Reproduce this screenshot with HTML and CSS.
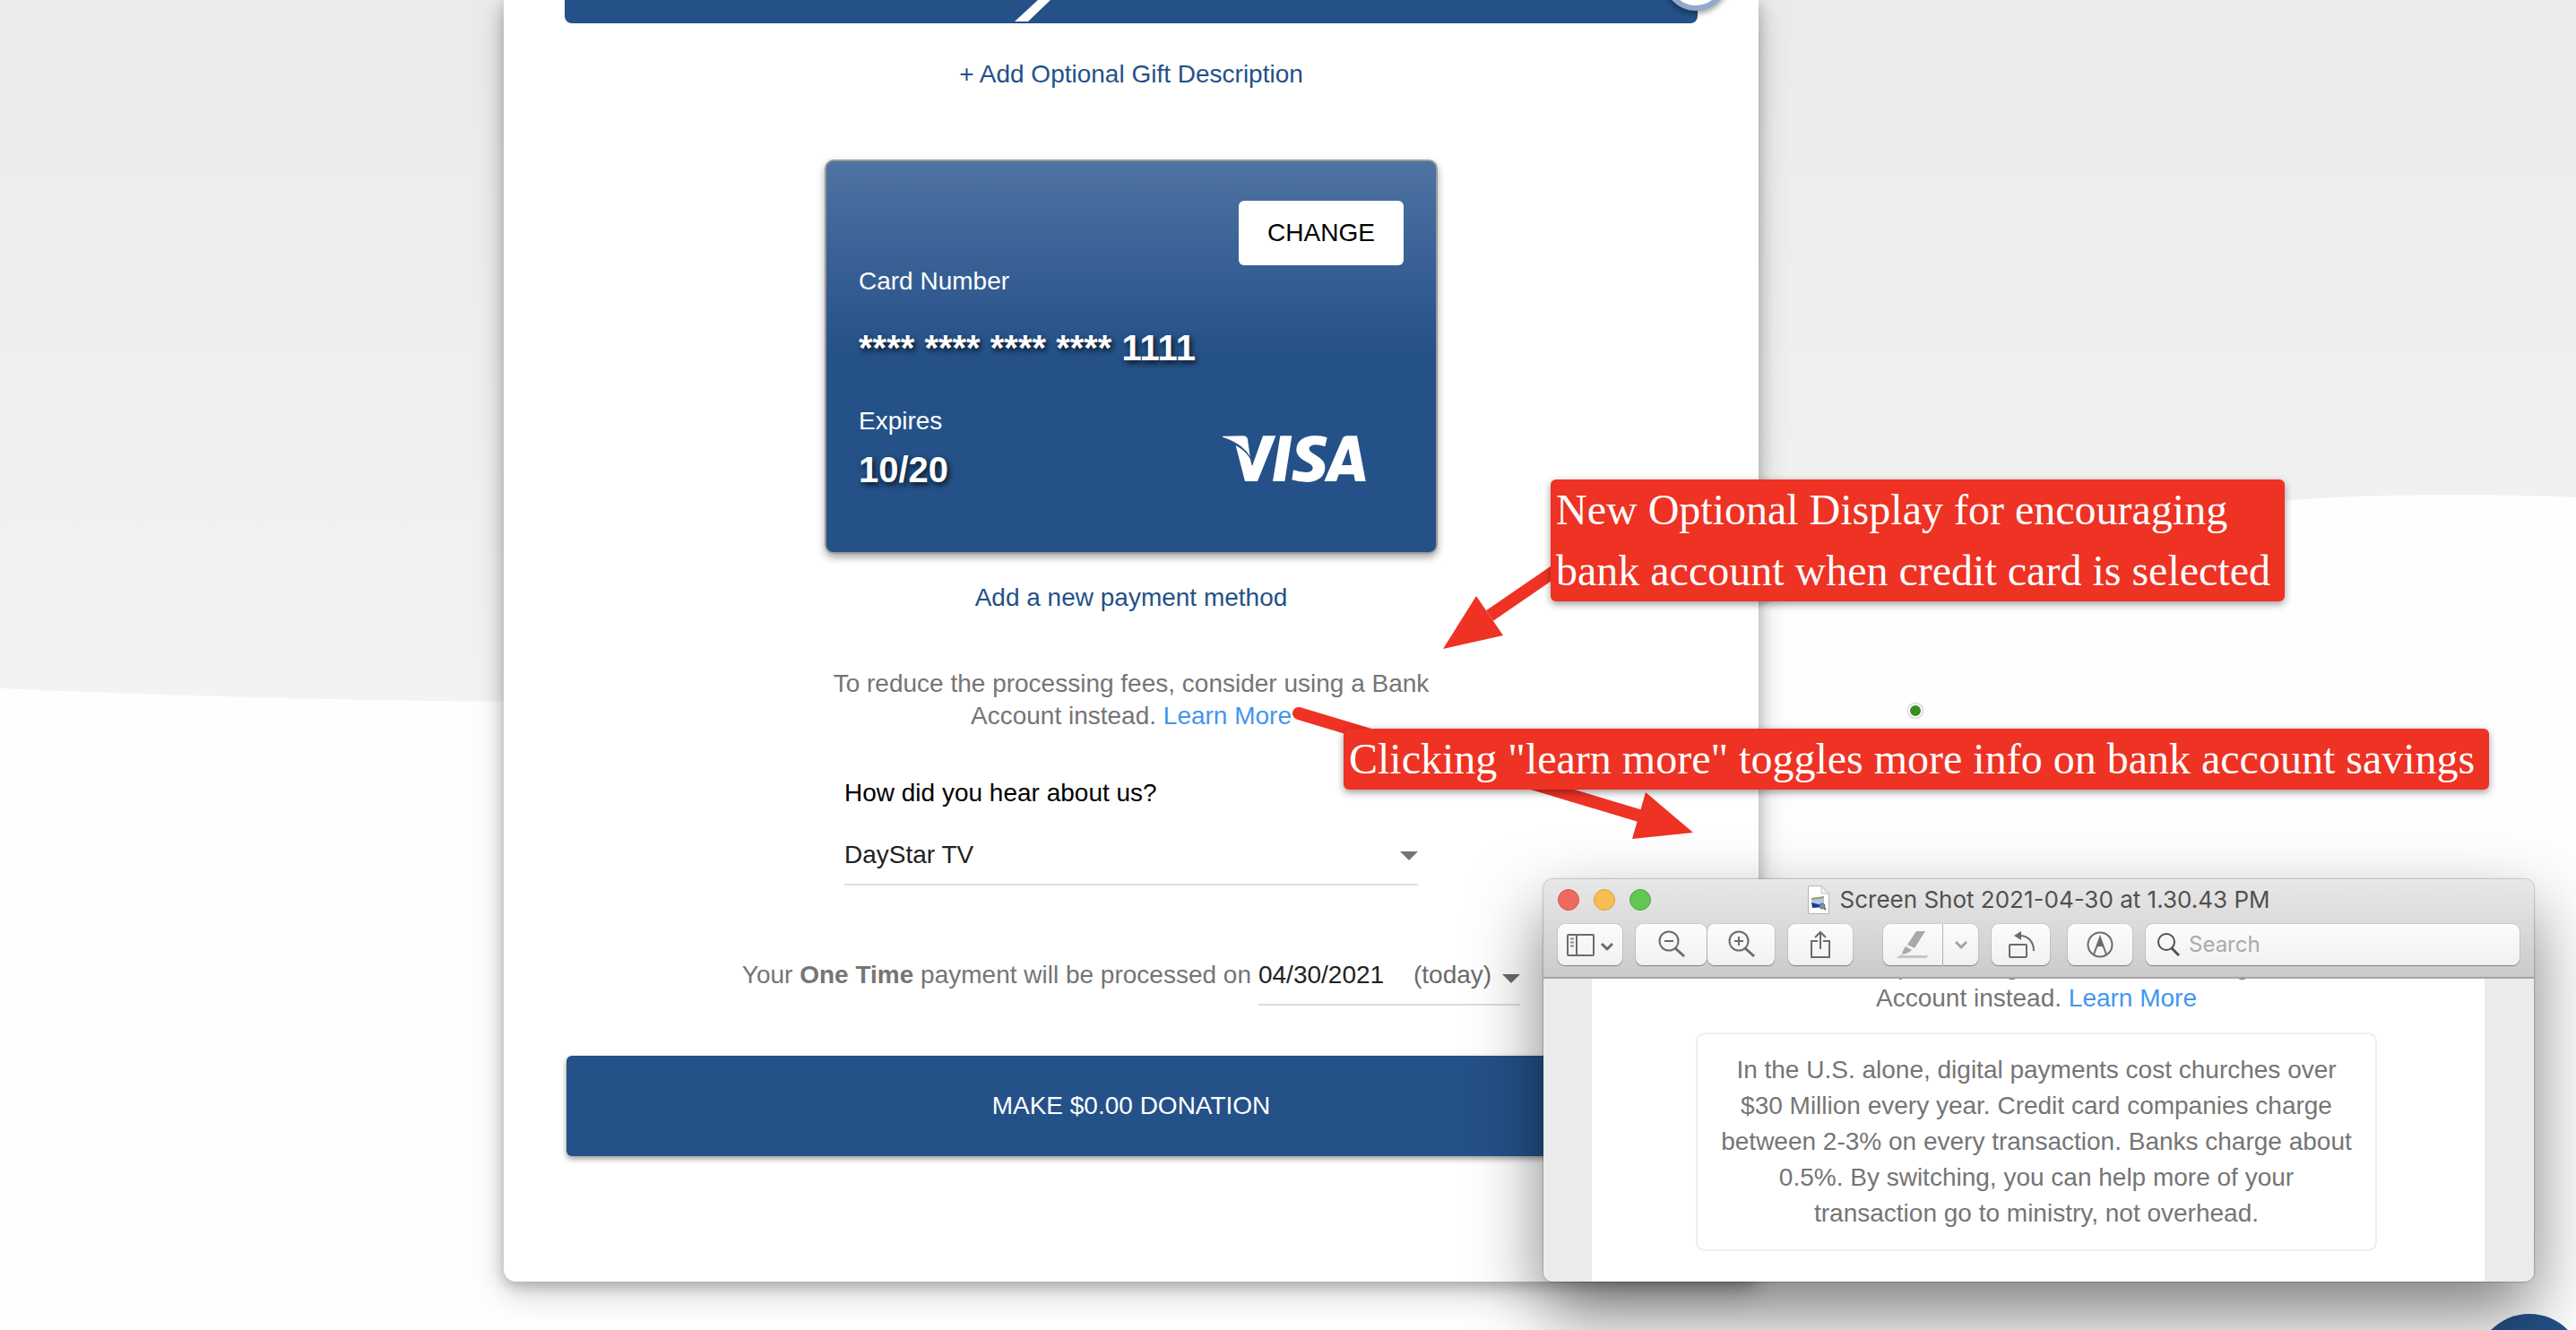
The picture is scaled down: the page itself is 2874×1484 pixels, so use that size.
FILE: index.html
```html
<!DOCTYPE html>
<html lang="en">
<head>
    <meta charset="UTF-8">
    <meta name="viewport" content="width=device-width, initial-scale=1.0">
    <title>Donation</title>
    <link rel="stylesheet" href="styles.css">
</head>
<body>
    <svg class="wave" viewBox="0 0 2874 1484" preserveAspectRatio="none" aria-hidden="true">
        <path d="M0 768 C180 776 380 782 600 783 C1200 790 1700 770 1962 677 C2160 610 2400 552 2740 552 C2790 552 2840 553 2874 555 V1484 H0 Z" fill="#fefefe"/>
    </svg>

    <main class="page">
        <form class="panel">
            <div class="gift-bar">
                <svg class="gift-slash" width="40" height="24" viewBox="0 0 40 24" aria-hidden="true"><path d="M26 0H40L15 24H0Z" fill="#fff"/></svg>
                <span class="gift-ring"></span>
            </div>
            <a class="link gift-link" href="#">+ Add Optional Gift Description</a>

            <section class="card">
                <button type="button" class="change">CHANGE</button>
                <div class="card-label">Card Number</div>
                <div class="card-value card-number">**** **** **** **** 1111</div>
                <div class="card-footer">
                    <div>
                        <div class="card-label">Expires</div>
                        <div class="card-value expires">10/20</div>
                    </div>
                    <svg class="visa" width="160" height="52" viewBox="0 0 480 156" fill="#fff" role="img" aria-label="Visa">
                        <path d="M0 2L70 1Q82 2 84 13L92 70Q66 26 0 5Z"/>
                        <path d="M44 33Q78 52 92 77L99 103L135 1H178L117 153H75Z"/>
                        <path d="M193 1H232L208 153H168Z"/>
                        <path d="M350 7L343 37Q322 29 306 31Q288 35 290 46Q292 56 316 68Q344 84 343 108Q341 152 284 156Q256 156 232 148L237 115Q262 124 282 123Q302 121 302 108Q302 98 280 88Q246 70 247 46Q250 4 306 0Q332 0 350 7Z"/>
                        <path fill-rule="evenodd" d="M340 153L402 9Q406 1 415 1H450L479 153H444L439 130H389L381 153ZM421 43L432 99H399Z"/>
                    </svg>
                </div>
            </section>

            <a class="link payment-link" href="#">Add a new payment method</a>
            <p class="note">To reduce the processing fees, consider using a Bank Account instead. <a href="#">Learn More</a></p>

            <div class="source">
                <label for="source">How did you hear about us?</label>
                <select id="source" name="source">
                    <option>DayStar TV</option>
                </select>
            </div>

            <div class="schedule">
                <label for="date">Your <b>One Time</b> payment will be processed on</label>
                <div class="date-field">
                    <input type="text" id="date" name="date" value="04/30/2021">
                    <button type="button" class="today">(today)</button>
                </div>
            </div>

            <button type="submit" class="donate">MAKE $0.00 DONATION</button>
        </form>
    </main>

    <svg class="arrows" width="2874" height="1484" viewBox="0 0 2874 1484" aria-hidden="true">
        <path d="M1745 630L1662 687" stroke="#ee3224" stroke-width="14"/>
        <path d="M1610 724L1647 665L1677 709Z" fill="#ee3224"/>
        <path d="M1449 796L1832 911" stroke="#ee3224" stroke-width="14" stroke-linecap="round"/>
        <path d="M1889 929L1836 884L1821 936Z" fill="#ee3224"/>
    </svg>
    <div class="callout callout-display">New Optional Display for encouraging<br>bank account when credit card is selected</div>
    <div class="callout callout-toggle">Clicking "learn more" toggles more info on bank account savings</div>
    <span class="dot"></span>
    <button type="button" class="help" aria-label="Help"></button>

    <section class="window">
        <header class="window-head">
            <div class="title-row">
                <div class="lights">
                    <span class="light red"></span>
                    <span class="light yellow"></span>
                    <span class="light green"></span>
                </div>
                <div class="title">
                    <svg width="24" height="32" viewBox="0 0 24 32" aria-hidden="true">
                        <path d="M.5 .5H15L23.500 9V31.500H.5Z" fill="#fff" stroke="#b5b5b5"/>
                        <path d="M15 .5V9H23.500Z" fill="#f0f0f0" stroke="#c4c4c4"/>
                        <path d="M4 14L18 12V24L5 25Z" fill="#a8c9f2"/>
                        <path d="M4 14L18 12V14L4 16Z" fill="#b79363"/>
                        <path d="M4 19L15 22L17 24L5 25Z" fill="#1f3c86"/>
                        <circle cx="16" cy="23" r="3" fill="#8a8f9c" stroke="#666"/>
                        <path d="M18 25L20 27" stroke="#666" stroke-width="2"/>
                    </svg>
                    <span>Screen Shot 2021-04-30 at 1.30.43 PM</span>
                </div>
            </div>
            <div class="toolbar">
                <button type="button" class="tool" aria-label="Sidebar">
                    <svg width="52" height="32" viewBox="0 0 52 32" fill="none" stroke="#6b6b6b" stroke-width="2">
                        <rect x="1" y="5" width="29" height="23" rx="1"/>
                        <path d="M11 5V28"/>
                        <path d="M4 9.500H8M4 13.500H8M4 17.500H8" stroke="#8a8a8a"/>
                        <path d="M39 15L45 21L51 15" stroke-width="3" stroke-linejoin="round"/>
                    </svg>
                </button>
                <button type="button" class="tool zoom-out" aria-label="Zoom out">
                    <svg width="32" height="32" viewBox="0 0 32 32" fill="none" stroke="#6b6b6b" stroke-width="2">
                        <circle cx="13" cy="12" r="10.500"/><path d="M8 12H18"/><path d="M20 20L30 29" stroke-width="3"/>
                    </svg>
                </button>
                <button type="button" class="tool zoom-in" aria-label="Zoom in">
                    <svg width="32" height="32" viewBox="0 0 32 32" fill="none" stroke="#6b6b6b" stroke-width="2">
                        <circle cx="13" cy="12" r="10.500"/><path d="M8 12H18M13 7V17"/><path d="M20 20L30 29" stroke-width="3"/>
                    </svg>
                </button>
                <button type="button" class="tool" aria-label="Share">
                    <svg width="32" height="32" viewBox="0 0 32 32" fill="none" stroke="#6b6b6b" stroke-width="2">
                        <path d="M13 12H6V30H26V12H19"/><path d="M16 21V2M10 8L16 2L22 8"/>
                    </svg>
                </button>
                <div class="pen-group">
                    <button type="button" class="tool pen" aria-label="Highlight">
                        <svg width="36" height="32" viewBox="0 0 36 32" fill="#a9a9a9">
                            <path d="M22 1H32L20 20L12 16Z"/>
                            <path d="M10 18L17 22L13 25L4 28L7 26L6 25Z"/>
                            <path d="M3 28H36L33 31H0Z" fill="#c6c6c6"/>
                        </svg>
                    </button>
                    <button type="button" class="tool pen-more" aria-label="Highlight colour">
                        <svg width="14" height="32" viewBox="0 0 14 32" fill="none" stroke="#a4a4a4" stroke-width="3"><path d="M1 13L7 19L13 13" stroke-linejoin="round"/></svg>
                    </button>
                </div>
                <button type="button" class="tool rotate" aria-label="Rotate">
                    <svg width="32" height="32" viewBox="0 0 32 32" fill="none" stroke="#6b6b6b" stroke-width="2">
                        <rect x="3" y="16" width="19" height="14" rx="1"/><path d="M14 6C24 6 30 13 30 23"/><path d="M16 1V11L8 6Z" fill="#6b6b6b" stroke="none"/>
                    </svg>
                </button>
                <button type="button" class="tool" aria-label="Markup">
                    <svg width="32" height="32" viewBox="0 0 32 32" fill="none" stroke="#6b6b6b" stroke-width="2">
                        <circle cx="16" cy="16" r="13.500"/><path d="M9 27L16 8L23 27"/><path d="M16 7L20 19Q16 17 12 19Z" fill="#6b6b6b" stroke="none"/>
                    </svg>
                </button>
                <div class="search">
                    <svg width="26" height="26" viewBox="0 0 26 26" fill="none" stroke="#505050" stroke-width="2"><circle cx="11" cy="10" r="9"/><path d="M17 17L25 25" stroke-width="3"/></svg>
                    <input type="text" placeholder="Search" aria-label="Search">
                </div>
            </div>
        </header>
        <div class="window-body">
            <div class="preview">
                <p class="note">To reduce the processing fees, consider using a Bank Account instead. <a href="#">Learn More</a></p>
                <p class="info">In the U.S. alone, digital payments cost churches over $30 Million every year. Credit card companies charge between 2-3% on every transaction. Banks charge about 0.5%. By switching, you can help more of your transaction go to ministry, not overhead.</p>
            </div>
        </div>
    </section>
</body>
</html>
```

FILE: styles.css
```css
* {
    box-sizing: border-box;
}
html {
    overflow: hidden;
}
body {
    margin: 0;
    position: relative;
    min-height: 100vh;
    overflow: hidden;
    background: linear-gradient(#ebebeb, #f3f3f3 780px);
    font-family: "Liberation Sans", Arial, sans-serif;
    font-size: 28px;
    line-height: 36px;
    color: #757575;
}
button, input, select {
    font: inherit;
    color: inherit;
    margin: 0;
    padding: 0;
    border: none;
    background: none;
}
p {
    margin: 0;
}
a {
    text-decoration: none;
}
.wave {
    position: absolute;
    top: 0;
    left: 0;
    width: 100%;
    height: 100%;
}
.page {
    position: relative;
    padding: 0 350px 54px 0;
}

/* donation panel */
.panel {
    display: flex;
    flex-direction: column;
    align-items: center;
    max-width: 1400px;
    margin: 0 auto;
    padding: 0 68px 140px;
    background: #fff;
    border-radius: 0 0 14px 14px;
    box-shadow: 0 4px 16px rgba(0, 0, 0, 0.24), 0 12px 36px rgba(0, 0, 0, 0.2);
}
.gift-bar {
    position: relative;
    width: 100%;
    height: 26px;
    background: #245188;
    border-radius: 0 0 8px 8px;
}
.gift-slash {
    position: absolute;
    left: 502px;
    top: 0;
}
.gift-ring {
    position: absolute;
    right: -34px;
    bottom: 14px;
    width: 72px;
    height: 72px;
    border: 6px solid #92a9cc;
    border-radius: 50%;
    background: #fff;
    box-shadow: 0 3px 6px rgba(0, 0, 0, 0.4);
}
.link {
    color: #245188;
}
.gift-link {
    margin-top: 39px;
}
.card {
    width: 684px;
    max-width: 100%;
    margin-top: 77px;
    padding: 44px 36px 70px;
    border: 2px solid #999;
    border-radius: 10px;
    background: linear-gradient(#4f74a2, #41679b 16%, #245188 50%);
    background-origin: border-box;
    box-shadow: 0 4px 8px rgba(0, 0, 0, 0.35);
    color: #fff;
    display: flex;
    flex-direction: column;
}
.change {
    align-self: flex-end;
    width: 184px;
    height: 72px;
    border-radius: 6px;
    background: #fff;
    color: #000;
}
.card-value {
    font-size: 40px;
    font-weight: bold;
    line-height: 44px;
    text-shadow: 2px 3px 6px rgba(0, 0, 0, 0.8);
}
.card-number {
    margin-top: 34px;
}
.card-footer {
    display: flex;
    justify-content: space-between;
    align-items: flex-end;
    margin-top: 42px;
}
.expires {
    margin-top: 14px;
}
.visa {
    margin: 0 42px 8px 0;
}
.payment-link {
    margin-top: 31px;
}
.note {
    width: 682px;
    text-align: center;
}
.panel .note {
    margin-top: 60px;
}
.note a {
    color: #4296f0;
}
.source {
    display: flex;
    flex-direction: column;
    width: 640px;
    margin-top: 50px;
    color: #000;
}
.source select {
    height: 70px;
    margin-top: 15px;
    padding-top: 4px;
    appearance: none;
    border-bottom: 2px solid #ddd;
    color: #212121;
    background: url("data:image/svg+xml,%3Csvg xmlns='http://www.w3.org/2000/svg' width='20' height='10'%3E%3Cpath d='M0 0H20L10 10Z' fill='%23757575'/%3E%3C/svg%3E") no-repeat right 32px;
}
.schedule {
    display: flex;
    gap: 8px;
    margin-top: 82px;
}
.date-field {
    display: flex;
    height: 52px;
    align-items: flex-start;
    border-bottom: 2px solid #ddd;
}
.date-field input {
    width: 173px;
    height: 36px;
    color: #212121;
}
.today {
    display: flex;
    align-items: center;
    gap: 12px;
    height: 36px;
    color: #6b6b6b;
}
.today::after {
    content: "";
    margin-top: 8px;
    border: 10px solid transparent;
    border-top-color: #6b6b6b;
    border-bottom: none;
}
.donate {
    align-self: stretch;
    height: 112px;
    margin: 56px 2px 0;
    background: #245188;
    border-radius: 6px;
    color: #fff;
    box-shadow: 0 3px 6px rgba(0, 0, 0, 0.4);
}

/* red notes laid over the page */
.arrows {
    position: absolute;
    top: 0;
    left: 0;
    fill: none;
    pointer-events: none;
}
.callout {
    position: absolute;
    padding: 0 16px 0 6px;
    background: #ee3224;
    border-radius: 6px;
    box-shadow: 0 3px 8px rgba(0, 0, 0, 0.4);
    color: #fff;
    font-family: "Liberation Serif", "Times New Roman", serif;
    font-size: 48px;
    line-height: 68px;
    white-space: nowrap;
}
.callout-display {
    left: 1730px;
    top: 535px;
}
.callout-toggle {
    left: 1499px;
    top: 813px;
}
.dot {
    position: absolute;
    left: 2129px;
    top: 785px;
    width: 16px;
    height: 16px;
    border: 2px solid #fff;
    border-radius: 50%;
    background: #388e1f;
    box-shadow: 0 0 2px rgba(0, 0, 0, 0.6);
}
.help {
    position: absolute;
    right: -8px;
    bottom: -102px;
    width: 120px;
    height: 120px;
    border-radius: 50%;
    background: #245188;
}

/* preview window */
.window {
    position: absolute;
    left: 1722px;
    top: 981px;
    width: 1105px;
    border-radius: 10px;
    overflow: hidden;
    box-shadow: 0 0 2px rgba(0, 0, 0, 0.6), 0 36px 80px rgba(0, 0, 0, 0.5);
}
.window-head {
    display: flex;
    flex-direction: column;
    gap: 4px;
    height: 111px;
    padding: 0 16px;
    border-bottom: 2px solid #a5a5a5;
    background: linear-gradient(#e8e8e8, #cbcbcb);
}
.title-row {
    position: relative;
    display: flex;
    align-items: center;
    height: 46px;
}
.lights {
    display: flex;
    gap: 16px;
}
.light {
    width: 24px;
    height: 24px;
    border: 1px solid #d6544a;
    border-radius: 50%;
    background: #ee6a5f;
}
.yellow {
    border-color: #dca03a;
    background: #f6be50;
}
.green {
    border-color: #4faa3b;
    background: #62c655;
}
.title {
    position: absolute;
    left: 0;
    right: 0;
    display: flex;
    justify-content: center;
    align-items: center;
    gap: 12px;
    color: #505050;
    font-family: Inter, sans-serif;
    font-size: 26px;
}
.toolbar {
    display: flex;
}
.tool, .search {
    display: flex;
    align-items: center;
    justify-content: center;
    height: 46px;
    border-radius: 8px;
    background: linear-gradient(#fcfcfc, #f1f1f1);
    box-shadow: 0 0 1px rgba(0, 0, 0, 0.5), 0 1px 1px rgba(0, 0, 0, 0.35);
}
.tool {
    flex-shrink: 0;
    width: 72px;
    margin-right: 15px;
}
.zoom-out {
    width: 79px;
    margin-right: 1px;
}
.zoom-in {
    width: 75px;
}
.pen-group {
    display: flex;
    flex-shrink: 0;
    margin: 0 15px 0 19px;
}
.pen {
    width: 66px;
    margin-right: 1px;
    border-radius: 8px 0 0 8px;
}
.pen-more {
    width: 39px;
    margin-right: 0;
    border-radius: 0 8px 8px 0;
}
.rotate {
    width: 65px;
    margin-right: 20px;
}
.search {
    flex: 1;
    min-width: 0;
    gap: 10px;
    padding: 0 12px;
}
.search svg {
    flex-shrink: 0;
}
.search input {
    flex: 1;
    min-width: 0;
    font-family: Inter, sans-serif;
    font-size: 24px;
}
.search input::placeholder {
    color: #aaa;
    opacity: 1;
}
.window-body {
    padding: 0 55px 0 54px;
    background: #ebebeb;
}
.preview {
    display: flex;
    flex-direction: column;
    justify-content: flex-end;
    align-items: center;
    height: 338px;
    padding: 0 4px 34px 0;
    overflow: hidden;
    background: #fff;
}
.info {
    width: 760px;
    margin-top: 20px;
    padding: 20px 24px;
    border: 2px solid #eee;
    border-radius: 10px;
    line-height: 40px;
    text-align: center;
}
```
